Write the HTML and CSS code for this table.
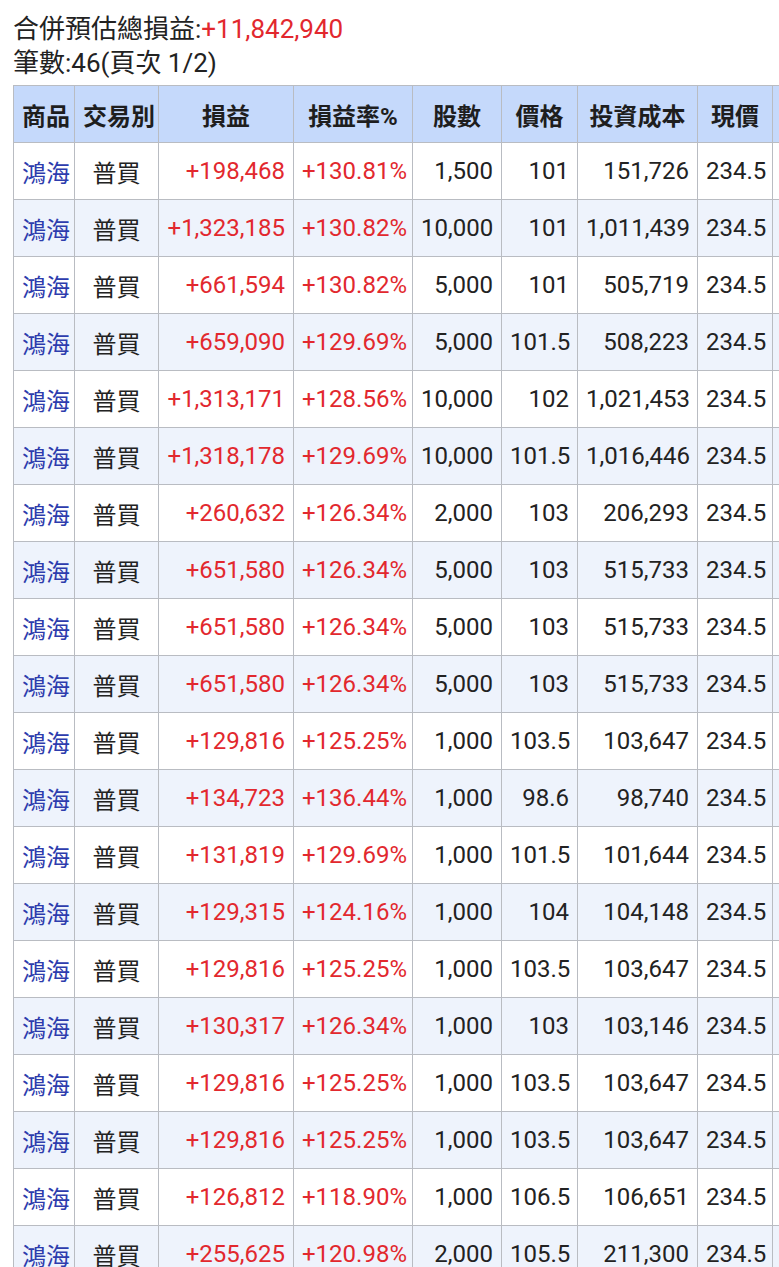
FILE: index.html
```html
<!DOCTYPE html>
<html lang="zh-Hant">
<head>
<meta charset="utf-8">
<title>合併預估總損益</title>
<link rel="stylesheet" href="styles.css">
</head>
<body>
<div class="page">
  <div class="summary">
    <div class="line">合併預估總損益:<span class="up">+11,842,940</span></div>
    <div class="line">筆數:46(頁次 1/2)</div>
  </div>
  <div class="scroller">
    <table class="grid">
      <colgroup>
        <col class="c-name"><col class="c-type"><col class="c-pl"><col class="c-rate"><col class="c-qty"><col class="c-price"><col class="c-cost"><col class="c-now"><col class="c-more">
      </colgroup>
      <thead>
        <tr><th>商品</th><th>交易別</th><th>損益</th><th>損益率%</th><th>股數</th><th>價格</th><th>投資成本</th><th>現價</th><th></th></tr>
      </thead>
      <tbody id="rows">
<tr><td class="name">鴻海</td><td class="type">普買</td><td class="num up">+198,468</td><td class="num up">+130.81%</td><td class="num">1,500</td><td class="num">101</td><td class="num">151,726</td><td class="now">234.5</td><td></td></tr>
<tr><td class="name">鴻海</td><td class="type">普買</td><td class="num up">+1,323,185</td><td class="num up">+130.82%</td><td class="num">10,000</td><td class="num">101</td><td class="num">1,011,439</td><td class="now">234.5</td><td></td></tr>
<tr><td class="name">鴻海</td><td class="type">普買</td><td class="num up">+661,594</td><td class="num up">+130.82%</td><td class="num">5,000</td><td class="num">101</td><td class="num">505,719</td><td class="now">234.5</td><td></td></tr>
<tr><td class="name">鴻海</td><td class="type">普買</td><td class="num up">+659,090</td><td class="num up">+129.69%</td><td class="num">5,000</td><td class="num">101.5</td><td class="num">508,223</td><td class="now">234.5</td><td></td></tr>
<tr><td class="name">鴻海</td><td class="type">普買</td><td class="num up">+1,313,171</td><td class="num up">+128.56%</td><td class="num">10,000</td><td class="num">102</td><td class="num">1,021,453</td><td class="now">234.5</td><td></td></tr>
<tr><td class="name">鴻海</td><td class="type">普買</td><td class="num up">+1,318,178</td><td class="num up">+129.69%</td><td class="num">10,000</td><td class="num">101.5</td><td class="num">1,016,446</td><td class="now">234.5</td><td></td></tr>
<tr><td class="name">鴻海</td><td class="type">普買</td><td class="num up">+260,632</td><td class="num up">+126.34%</td><td class="num">2,000</td><td class="num">103</td><td class="num">206,293</td><td class="now">234.5</td><td></td></tr>
<tr><td class="name">鴻海</td><td class="type">普買</td><td class="num up">+651,580</td><td class="num up">+126.34%</td><td class="num">5,000</td><td class="num">103</td><td class="num">515,733</td><td class="now">234.5</td><td></td></tr>
<tr><td class="name">鴻海</td><td class="type">普買</td><td class="num up">+651,580</td><td class="num up">+126.34%</td><td class="num">5,000</td><td class="num">103</td><td class="num">515,733</td><td class="now">234.5</td><td></td></tr>
<tr><td class="name">鴻海</td><td class="type">普買</td><td class="num up">+651,580</td><td class="num up">+126.34%</td><td class="num">5,000</td><td class="num">103</td><td class="num">515,733</td><td class="now">234.5</td><td></td></tr>
<tr><td class="name">鴻海</td><td class="type">普買</td><td class="num up">+129,816</td><td class="num up">+125.25%</td><td class="num">1,000</td><td class="num">103.5</td><td class="num">103,647</td><td class="now">234.5</td><td></td></tr>
<tr><td class="name">鴻海</td><td class="type">普買</td><td class="num up">+134,723</td><td class="num up">+136.44%</td><td class="num">1,000</td><td class="num">98.6</td><td class="num">98,740</td><td class="now">234.5</td><td></td></tr>
<tr><td class="name">鴻海</td><td class="type">普買</td><td class="num up">+131,819</td><td class="num up">+129.69%</td><td class="num">1,000</td><td class="num">101.5</td><td class="num">101,644</td><td class="now">234.5</td><td></td></tr>
<tr><td class="name">鴻海</td><td class="type">普買</td><td class="num up">+129,315</td><td class="num up">+124.16%</td><td class="num">1,000</td><td class="num">104</td><td class="num">104,148</td><td class="now">234.5</td><td></td></tr>
<tr><td class="name">鴻海</td><td class="type">普買</td><td class="num up">+129,816</td><td class="num up">+125.25%</td><td class="num">1,000</td><td class="num">103.5</td><td class="num">103,647</td><td class="now">234.5</td><td></td></tr>
<tr><td class="name">鴻海</td><td class="type">普買</td><td class="num up">+130,317</td><td class="num up">+126.34%</td><td class="num">1,000</td><td class="num">103</td><td class="num">103,146</td><td class="now">234.5</td><td></td></tr>
<tr><td class="name">鴻海</td><td class="type">普買</td><td class="num up">+129,816</td><td class="num up">+125.25%</td><td class="num">1,000</td><td class="num">103.5</td><td class="num">103,647</td><td class="now">234.5</td><td></td></tr>
<tr><td class="name">鴻海</td><td class="type">普買</td><td class="num up">+129,816</td><td class="num up">+125.25%</td><td class="num">1,000</td><td class="num">103.5</td><td class="num">103,647</td><td class="now">234.5</td><td></td></tr>
<tr><td class="name">鴻海</td><td class="type">普買</td><td class="num up">+126,812</td><td class="num up">+118.90%</td><td class="num">1,000</td><td class="num">106.5</td><td class="num">106,651</td><td class="now">234.5</td><td></td></tr>
<tr><td class="name">鴻海</td><td class="type">普買</td><td class="num up">+255,625</td><td class="num up">+120.98%</td><td class="num">2,000</td><td class="num">105.5</td><td class="num">211,300</td><td class="now">234.5</td><td></td></tr>
      </tbody>
    </table>
  </div>
</div>
</body>
</html>
```

FILE: styles.css
```css
html, body {
  margin: 0;
  padding: 0;
  background: #ffffff;
}

body {
  font-family: Roboto, "Noto Sans CJK TC", sans-serif;
  color: #222222;
  overflow: hidden;
}

.page {
  padding: 12px 0 0 13px;
}

.summary {
  font-size: 26px;
  line-height: 34px;
  margin-bottom: 5px;
}

.up {
  color: #e2282e;
}

.scroller {
  overflow: hidden;
}

.grid {
  border-collapse: collapse;
  table-layout: fixed;
  width: 880px;
  font-size: 24px;
}

.c-name { width: 61px; }
.c-type { width: 84px; }
.c-pl { width: 135px; }
.c-rate { width: 119px; }
.c-qty { width: 89px; }
.c-price { width: 76px; }
.c-cost { width: 120px; }
.c-now { width: 75px; }
.c-more { width: 121px; }

.grid th,
.grid td {
  border: 1px solid #b9bcc2;
  height: 56px;
  padding: 0 8px;
  white-space: nowrap;
  overflow: hidden;
}

.grid th {
  background: #c5d9fb;
  font-weight: bold;
  text-align: center;
  color: #1e1e1e;
}

.grid tbody tr:nth-child(even) td {
  background: #eef3fc;
}

.name {
  color: #2d3cad;
  text-align: left;
}

.type {
  text-align: center;
}

.num {
  text-align: right;
}

.now {
  text-align: left;
}
```
